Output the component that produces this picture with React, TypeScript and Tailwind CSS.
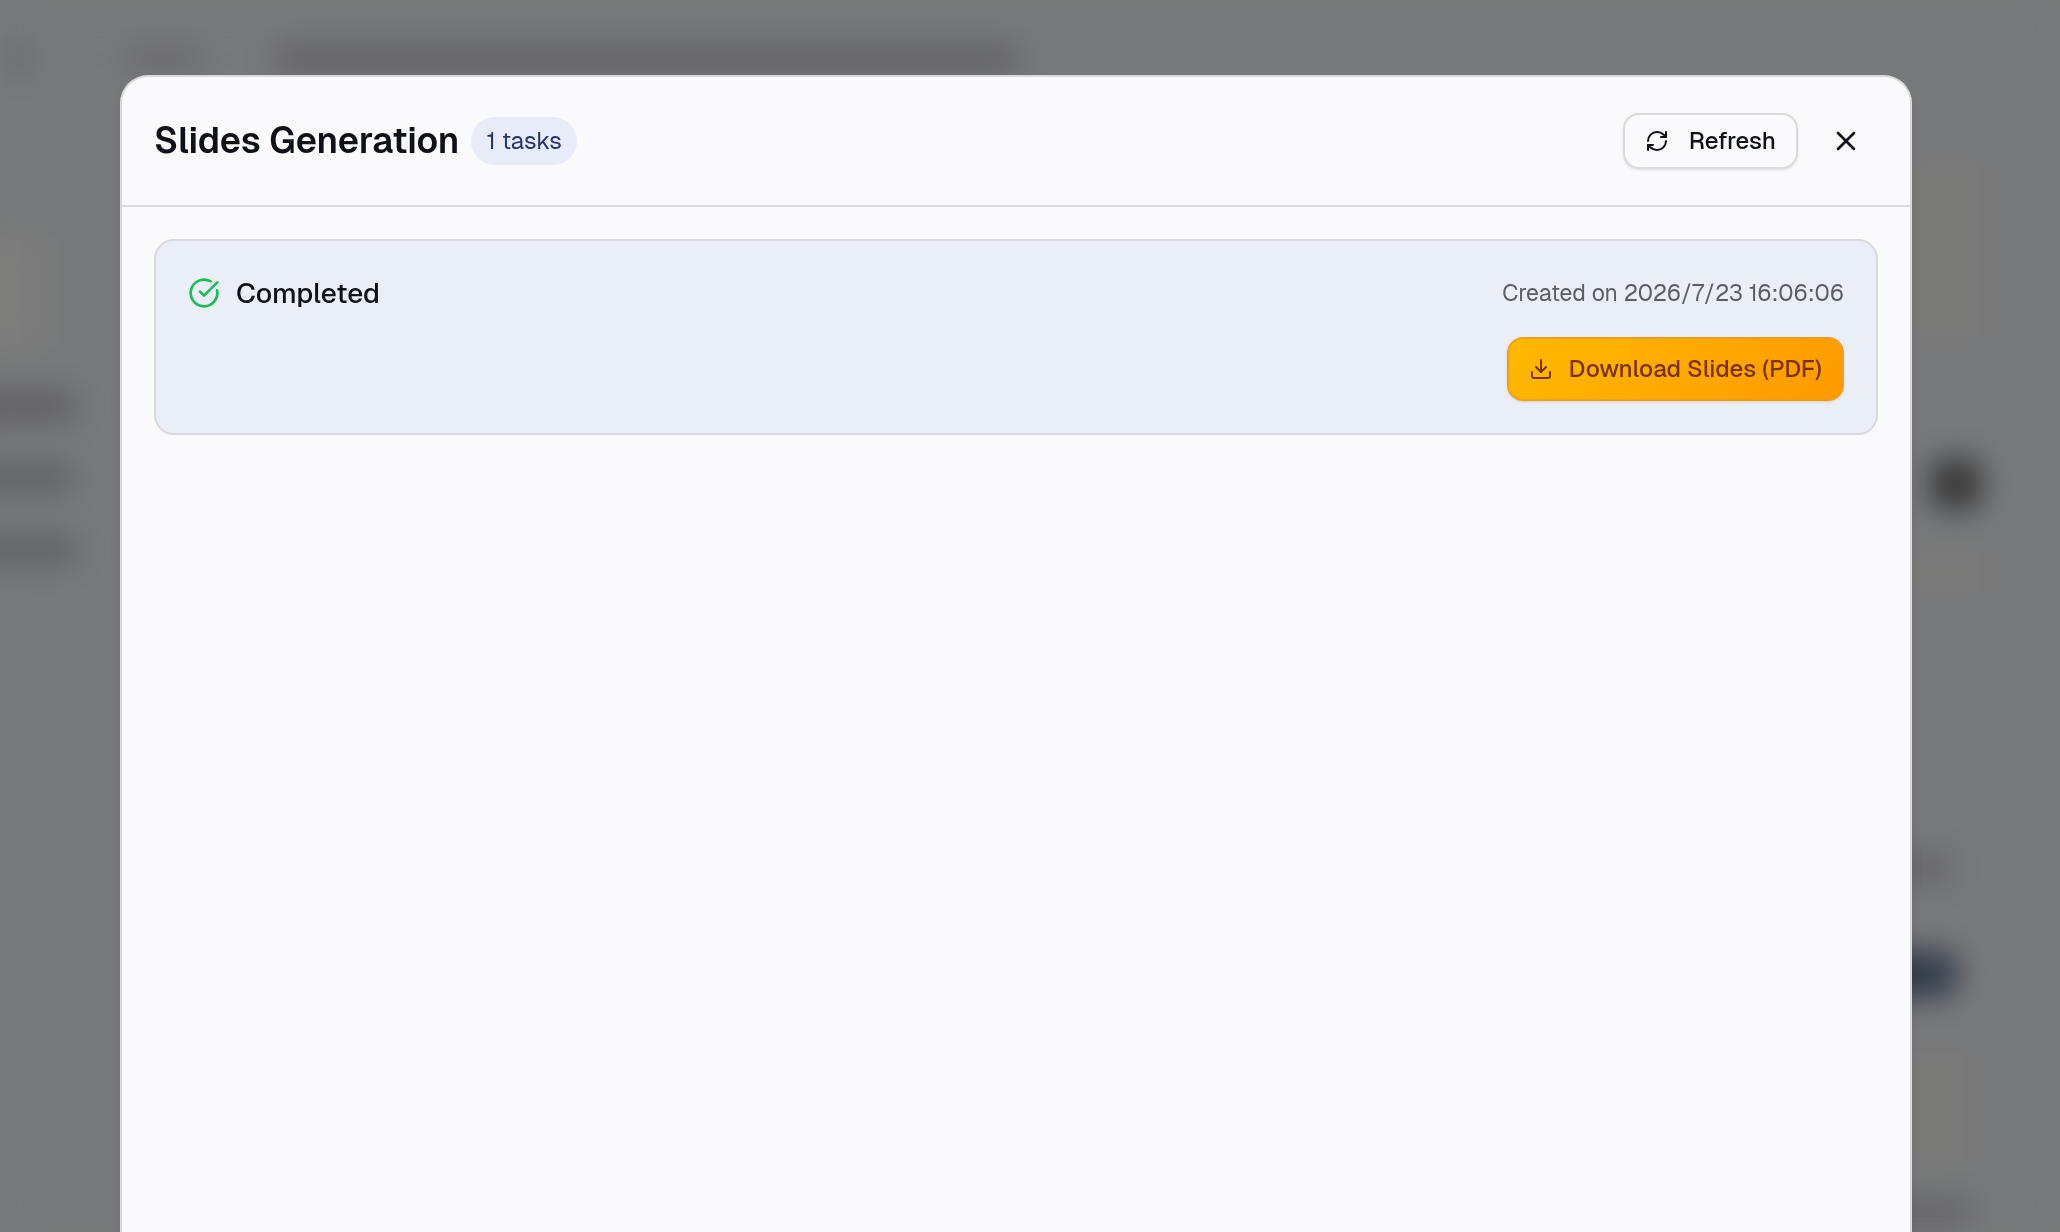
import { useState } from 'react';
import { CircleCheckBig, Download, RefreshCw, X } from 'lucide-react';

interface SlideTask {
  id: string;
  status: 'completed' | 'pending';
  createdAt: string;
}

const initialTasks: SlideTask[] = [
  { id: 'task-1', status: 'completed', createdAt: '2026/7/23 16:06:06' }
];

// Page behind the dialog, only visible as blurred shapes
function PageBackdrop() {
  return (
    <div aria-hidden="true" className="flex h-screen flex-col bg-[#78797a] blur-lg">
      <div className="flex h-[118px] shrink-0 items-center pl-2">
        <div className="h-8 w-5 bg-[#666668]" />
        <div className="ml-24 h-6 w-20 bg-[#69696c]" />
        <div className="ml-[70px] h-8 w-[746px] bg-[#646466]" />
      </div>
      <div className="flex flex-1 justify-between">
        <div className="flex w-20 flex-col">
          <div className="mt-[118px] -ml-10 h-28 w-20 bg-[#7e7e7d]" />
          <div className="mt-11 -ml-10 h-7 w-[116px] bg-[#5d5d5f]" />
          <div className="mt-11 -ml-10 h-7 w-28 bg-[#5e5f61]" />
          <div className="mt-11 -ml-10 h-7 w-[116px] bg-[#5e5f61]" />
        </div>
        <div className="flex w-[152px] flex-col">
          <div className="mt-11 -ml-10 h-44 w-28 bg-[#7a7a79]" />
          <div className="mt-[122px] ml-6 h-12 w-12 rounded-lg bg-[#313132]" />
          <div className="mt-11 -ml-10 h-10 w-28 bg-[#7a7a79]" />
          <div className="mt-[260px] -ml-10 h-8 w-[84px] bg-[#666668]" />
          <div className="mt-[68px] -ml-10 h-11 w-[88px] rounded-lg bg-[#2c3746]" />
          <div className="mt-14 -ml-10 h-28 w-24 bg-[#7a7a79]" />
          <div className="mt-8 -ml-10 h-8 w-[104px] bg-[#676769]" />
        </div>
      </div>
    </div>
  );
}

function TaskCard({ task }: { task: SlideTask }) {
  return (
    <li className="flex flex-col gap-6 rounded-[20px] border-2 border-[#d9d9df] bg-[#eaeef7] p-8">
      <div className="flex h-10 items-center justify-between">
        <div className="flex items-center gap-4">
          <CircleCheckBig className="size-8 text-[#1bbd57]" />
          <span className="text-[28px] font-medium">
            {task.status === 'completed' ? 'Completed' : 'Pending'}
          </span>
        </div>
        <span className="text-[23px] text-[#5a5d67]">Created on {task.createdAt}</span>
      </div>
      <div className="flex justify-end">
        <button
          type="button"
          className="flex h-16 items-center gap-4 rounded-2xl border-2 border-[#f59a14]/80 bg-linear-135 from-amber-400 to-amber-500 px-5 text-2xl font-medium text-amber-900 shadow-sm"
        >
          <Download className="size-6" />
          Download Slides (PDF)
        </button>
      </div>
    </li>
  );
}

export default function App() {
  const [tasks, setTasks] = useState(initialTasks);
  const [open, setOpen] = useState(true);

  const handleRefresh = () => {
    setTasks([...initialTasks]);
  };

  return (
    <div className="h-screen overflow-hidden bg-[#78797a] font-['Geist','Inter',sans-serif] text-[#0f1119]">
      <PageBackdrop />
      {open && (
        <div className="fixed inset-0 pt-[75px] pr-[148px] pl-[120px]">
          <div
            role="dialog"
            aria-labelledby="dialog-title"
            className="flex h-full flex-col rounded-t-[28px] border-2 border-b-0 border-[#d9d9dd] bg-[#fafafc] shadow-lg"
          >
            <header className="flex items-center justify-between border-b-2 border-[#d9d9df] p-8">
              <div className="flex items-center gap-3">
                <h2 id="dialog-title" className="text-4xl font-semibold">Slides Generation</h2>
                <span className="flex h-12 items-center rounded-full bg-[#e8ecf8] px-[15px] text-2xl text-[#26366c]">
                  {tasks.length} tasks
                </span>
              </div>
              <div className="flex items-center gap-4">
                <button
                  type="button"
                  onClick={handleRefresh}
                  className="flex h-14 items-center gap-5 rounded-2xl border-2 border-[#d9d9df] px-5 text-2xl font-medium shadow-sm"
                >
                  <RefreshCw className="size-6" />
                  Refresh
                </button>
                <button
                  type="button"
                  aria-label="Close"
                  onClick={() => setOpen(false)}
                  className="flex size-16 items-center justify-center"
                >
                  <X className="size-8" />
                </button>
              </div>
            </header>
            <ul className="flex flex-1 flex-col gap-4 overflow-y-auto p-8">
              {tasks.map(task => (
                <TaskCard key={task.id} task={task} />
              ))}
            </ul>
          </div>
        </div>
      )}
    </div>
  );
}
